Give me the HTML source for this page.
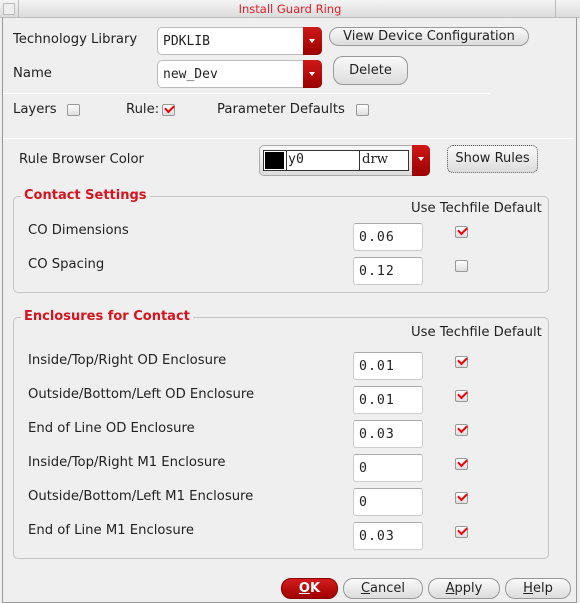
<!DOCTYPE html>
<html><head><style>
*{box-sizing:border-box;margin:0;padding:0}
body{width:580px;height:603px;background:#efefef;font-family:"DejaVu Sans","Liberation Sans",sans-serif;font-size:13.2px;color:#222;position:relative;overflow:hidden}
.a{position:absolute;white-space:nowrap}
.title{left:0;top:0;width:580px;height:18px;background:linear-gradient(#f4f4f4,#dcdcdc);border-bottom:1px solid #bbb}
.title span{position:absolute;left:0;width:580px;text-align:center;top:2px;color:#e0202a;font-size:11.5px}
.wb{position:absolute;top:0;bottom:0;width:1px;background:#999}
.combo{background:#fff;border:1px solid #bbb;border-radius:5px;font-family:"DejaVu Sans Mono","Liberation Mono",monospace;font-size:13px;padding:6px 0 0 5px}
.dd{position:absolute;right:-1px;top:-1px;bottom:-1px;width:19px;background:linear-gradient(#d01818,#9a0000);border-radius:0 5px 5px 0}
.dd:after{content:"";position:absolute;left:6px;top:12px;border-left:3.5px solid transparent;border-right:3.5px solid transparent;border-top:4px solid #fff}
.btn{background:linear-gradient(#fafafa,#dcdcdc);border:1px solid #999;border-radius:10px;text-align:center;font-size:13px}
.cb{width:13px;height:12px;background:linear-gradient(#fff,#ddd);border:1px solid #999;border-radius:2px}
.cb.on:after{content:"";position:absolute;left:2px;top:0px;width:7px;height:4px;border-left:2.5px solid #e00;border-bottom:2.5px solid #e00;transform:rotate(-45deg)}
.sep{height:1px;background:#c8c8c8;border-bottom:1px solid #fff}
.grp{border:1px solid #c4c4c4;border-radius:5px}
.gt{color:#d4141e;font-weight:bold;background:#efefef;padding:0 3px;font-size:13px}
.inp{width:70px;height:28px;background:#fff;border:1px solid #ccc;border-top-color:#aaa;border-radius:3px;font-family:"DejaVu Sans Mono","Liberation Mono",monospace;padding:6px 0 0 5px;letter-spacing:1px}
</style></head><body>
<div class="a title"><span>Install Guard Ring</span>
<div class="a" style="left:3px;top:3px;width:12px;height:12px;border:1px solid #bbb;background:#eee"></div>
<div class="a" style="left:555px;top:0;width:1px;height:18px;background:#bbb"></div>
<div class="a" style="left:18px;top:0;width:1px;height:18px;background:#bbb"></div>
</div>
<div class="wb" style="left:2px;top:18px"></div>
<div class="wb" style="left:576px;top:18px"></div>
<div class="a" style="left:2px;right:3px;bottom:0;height:1px;background:#999"></div>

<div class="a" style="left:13px;top:32px">Technology Library</div>
<div class="a combo" style="left:157px;top:27px;width:165px;height:28px">PDKLIB<div class="dd"></div></div>
<div class="a btn" style="left:329px;top:27px;width:200px;height:19px;line-height:17px">View Device Configuration</div>
<div class="a" style="left:13px;top:66px">Name</div>
<div class="a combo" style="left:157px;top:60px;width:165px;height:28px">new_Dev<div class="dd"></div></div>
<div class="a btn" style="left:333px;top:56px;width:75px;height:29px;line-height:27px">Delete</div>
<div class="a sep" style="left:3px;top:93px;width:487px"></div>
<div class="a" style="left:13px;top:102px">Layers</div>
<div class="a cb" style="left:67px;top:104px"></div>
<div class="a" style="left:126px;top:102px">Rule:</div>
<div class="a cb on" style="left:162px;top:104px"></div>
<div class="a" style="left:217px;top:102px">Parameter Defaults</div>
<div class="a cb" style="left:356px;top:104px"></div>
<div class="a sep" style="left:3px;top:138px;width:570px"></div>

<div class="a" style="left:19px;top:152px">Rule Browser Color</div>
<div class="a" style="left:259px;top:145px;width:171px;height:31px;border:1px solid #aaa;border-radius:5px;background:linear-gradient(#fafafa,#ddd)">
<div class="a" style="left:3px;top:4px;width:146px;height:21px;border:1px solid #333;background:#fff"></div>
<div class="a" style="left:5px;top:6px;width:19px;height:17px;background:#000"></div>
<div class="a" style="left:26px;top:4px;width:1px;height:21px;background:#333"></div>
<div class="a" style="left:99px;top:4px;width:1px;height:21px;background:#333"></div>
<div class="a" style="left:28px;top:6px;font-family:'DejaVu Sans Mono',monospace">y0</div>
<div class="a" style="left:102px;top:6px;font-family:'DejaVu Serif','Liberation Serif',serif">drw</div>
<div class="dd" style="width:18px"></div></div>
<div class="a btn" style="left:447px;top:145px;width:91px;height:28px;line-height:26px;border-radius:6px;border:1px dotted #555">Show Rules</div>

<div class="a grp" style="left:13px;top:196px;width:536px;height:97px"></div>
<div class="a gt" style="left:21px;top:188px">Contact Settings</div>
<div class="a" style="left:411px;top:201px">Use Techfile Default</div>
<div class="a" style="left:28px;top:223px">CO Dimensions</div>
<div class="a inp" style="left:353px;top:223px">0.06</div>
<div class="a cb on" style="left:455px;top:226px"></div>
<div class="a" style="left:28px;top:257px">CO Spacing</div>
<div class="a inp" style="left:353px;top:257px">0.12</div>
<div class="a cb" style="left:455px;top:260px"></div>

<div class="a grp" style="left:13px;top:317px;width:536px;height:242px"></div>
<div class="a gt" style="left:21px;top:309px">Enclosures for Contact</div>
<div class="a" style="left:411px;top:325px">Use Techfile Default</div>
<div class="a" style="left:28px;top:353px">Inside/Top/Right OD Enclosure</div>
<div class="a inp" style="left:353px;top:352px">0.01</div>
<div class="a cb on" style="left:455px;top:356px"></div>
<div class="a" style="left:28px;top:387px">Outside/Bottom/Left OD Enclosure</div>
<div class="a inp" style="left:353px;top:386px">0.01</div>
<div class="a cb on" style="left:455px;top:390px"></div>
<div class="a" style="left:28px;top:421px">End of Line OD Enclosure</div>
<div class="a inp" style="left:353px;top:420px">0.03</div>
<div class="a cb on" style="left:455px;top:424px"></div>
<div class="a" style="left:28px;top:455px">Inside/Top/Right M1 Enclosure</div>
<div class="a inp" style="left:353px;top:454px">0</div>
<div class="a cb on" style="left:455px;top:458px"></div>
<div class="a" style="left:28px;top:489px">Outside/Bottom/Left M1 Enclosure</div>
<div class="a inp" style="left:353px;top:488px">0</div>
<div class="a cb on" style="left:455px;top:492px"></div>
<div class="a" style="left:28px;top:523px">End of Line M1 Enclosure</div>
<div class="a inp" style="left:353px;top:522px">0.03</div>
<div class="a cb on" style="left:455px;top:526px"></div>

<div class="a btn" style="left:281px;top:578px;width:57px;height:21px;line-height:19px;background:linear-gradient(#d41c1c,#a00000);border-color:#800;color:#fff;font-weight:bold"><u>O</u>K</div>
<div class="a btn" style="left:343px;top:578px;width:80px;height:21px;line-height:19px"><u>C</u>ancel</div>
<div class="a btn" style="left:428px;top:578px;width:72px;height:21px;line-height:19px"><u>A</u>pply</div>
<div class="a btn" style="left:505px;top:578px;width:66px;height:21px;line-height:19px"><u>H</u>elp</div>
</body></html>
